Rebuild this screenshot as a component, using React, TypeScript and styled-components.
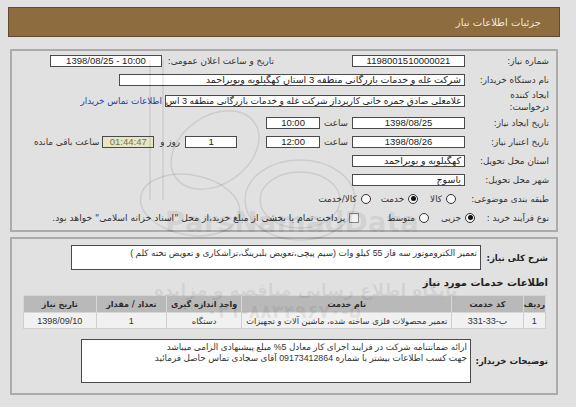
import React from "react";
import styled, { createGlobalStyle } from "styled-components";

const Global = createGlobalStyle`
  html, body { margin: 0; padding: 0; background: #e1e1e1; }
  body { font-family: "Liberation Sans", "DejaVu Sans", sans-serif; color: #333; }
  * { box-sizing: border-box; }
`;

const Page = styled.div`
  direction: rtl;
  position: relative;
  width: 576px;
  height: 407px;
  overflow: hidden;
  padding: 7px 16px 0 8px;
`;

const Header = styled.div`
  height: 30px;
  border: 1px solid #5e4b31;
  background: #8d6c3f;
  display: flex;
  align-items: center;
  padding-right: 18px;
  color: #f1e9da;
  font-size: 10px;
  font-family: "DejaVu Sans", sans-serif;
`;

const InfoPanel = styled.div`
  margin: 12px 2px 0 2px;
  border: 2px solid #ababab;
  padding: 0 7px 3px 0;
`;

const DetailPanel = styled.div`
  margin: 5px 2px 0 2px;
  border: 2px solid #ababab;
  padding: 6px 8px 10px 0;
`;

const Row = styled.div<{ $h?: number; $mt?: number }>`
  display: flex;
  align-items: center;
  min-height: ${(p) => p.$h ?? 19}px;
  margin-top: ${(p) => p.$mt ?? 0}px;
`;

const Label = styled.div<{ $w?: number; $bold?: boolean }>`
  width: ${(p) => p.$w ?? 84}px;
  flex: none;
  font-family: "DejaVu Sans", sans-serif;
  font-size: ${(p) => (p.$bold ? 8.6 : 8.8)}px;
  font-weight: ${(p) => (p.$bold ? "bold" : "normal")};
  line-height: 12px;
  white-space: nowrap;
  color: ${(p) => (p.$bold ? "#222" : "#333")};
`;

const Field = styled.div<{ $w: number; $ltr?: boolean; $tone?: "yellow"; $size?: number }>`
  width: ${(p) => p.$w}px;
  height: 12px;
  flex: none;
  border: 1px solid #4a4a4a;
  background: ${(p) => (p.$tone === "yellow" ? "#e6e6c4" : "#fff")};
  color: ${(p) => (p.$tone === "yellow" ? "#76764e" : "#222")};
  font-family: "Liberation Sans", "DejaVu Sans", sans-serif;
  font-size: ${(p) => p.$size ?? 9.5}px;
  line-height: 10px;
  padding: 0 3px;
  white-space: nowrap;
  overflow: hidden;
  direction: ${(p) => (p.$ltr ? "ltr" : "rtl")};
  text-align: ${(p) => (p.$ltr ? "center" : "right")};
`;

const TextArea = styled.div<{ $w: number; $h: number }>`
  width: ${(p) => p.$w}px;
  height: ${(p) => p.$h}px;
  flex: none;
  border: 1px solid #4a4a4a;
  background: #fff;
  font-family: "Liberation Sans", "DejaVu Sans", sans-serif;
  font-size: 8.8px;
  line-height: 10.5px;
  padding: 2px 3px;
  overflow: hidden;
`;

const Line = styled.div`
  white-space: nowrap;
`;

const Small = styled.span<{ $ml?: number; $mr?: number }>`
  font-family: "DejaVu Sans", sans-serif;
  font-size: 8.8px;
  white-space: nowrap;
  margin-left: ${(p) => p.$ml ?? 0}px;
  margin-right: ${(p) => p.$mr ?? 0}px;
`;

const Link = styled.a`
  font-family: "DejaVu Sans", sans-serif;
  font-size: 8.8px;
  color: #1f3f9e;
  text-decoration: none;
  white-space: nowrap;
  margin-right: 3px;
`;

const Options = styled.div`
  display: flex;
  align-items: center;
`;

const Option = styled.label<{ $gap?: number; $size?: number }>`
  display: flex;
  align-items: center;
  gap: 4px;
  margin-left: ${(p) => p.$gap ?? 10}px;
  font-family: "DejaVu Sans", sans-serif;
  font-size: ${(p) => p.$size ?? 8.8}px;
  white-space: nowrap;
`;

const Radio = styled.span<{ $on?: boolean }>`
  width: 10px;
  height: 10px;
  border-radius: 50%;
  border: 1px solid #333;
  background: #f7f7f7;
  position: relative;
  flex: none;
  &::after {
    content: "";
    position: absolute;
    inset: 1.5px;
    border-radius: 50%;
    background: ${(p) => (p.$on ? "#111" : "transparent")};
  }
`;

const Check = styled.span`
  width: 10px;
  height: 10px;
  border: 1px solid #888;
  background: #f2f2f2;
  flex: none;
`;

const Title = styled.div`
  font-family: "DejaVu Sans", sans-serif;
  font-weight: bold;
  font-size: 10px;
  height: 20px;
  line-height: 20px;
  margin: 3px 0 2px 0;
  color: #222;
`;

const Table = styled.table`
  width: 523px;
  margin-right: 2px;
  border-collapse: collapse;
  font-family: "Liberation Sans", "DejaVu Sans", sans-serif;
  font-size: 9px;
`;

const Th = styled.th<{ $w: number }>`
  width: ${(p) => p.$w}px;
  height: 17px;
  background: #b9b9b9;
  border: 1px solid #d6d6d6;
  font-family: "DejaVu Sans", sans-serif;
  font-size: 8px;
  font-weight: bold;
  color: #2a2a2a;
  padding: 0;
`;

const Td = styled.td`
  height: 16px;
  background: #f1f1f1;
  border: 1px solid #cfcfcf;
  text-align: center;
  padding: 0 2px;
  white-space: nowrap;
  color: #333;
`;

const CellText = styled.span`
  font-family: "DejaVu Sans", sans-serif;
  font-size: 8.3px;
`;

const Buttons = styled.div`
  display: flex;
  gap: 12px;
  margin-top: 12px;
  margin-right: 82px;
`;

const Btn = styled.div<{ $w: number; $red?: boolean }>`
  width: ${(p) => p.$w}px;
  height: 20px;
  border: 1px solid ${(p) => (p.$red ? "#b88" : "#7a9a7a")};
  background: ${(p) => (p.$red ? "#f6dada" : "#e6f5e6")};
`;

const Watermark = styled.div`
  position: absolute;
  inset: 0;
  pointer-events: none;
  direction: ltr;
`;

const WmText = styled.div<{ $x: number; $y: number; $s: number }>`
  position: absolute;
  left: ${(p) => p.$x}px;
  top: ${(p) => p.$y}px;
  font-size: ${(p) => p.$s}px;
  font-weight: bold;
  color: rgba(0, 0, 0, 0.07);
  white-space: nowrap;
  font-family: "DejaVu Sans", sans-serif;
`;

const services = [
  { w: 21, h: "ردیف", v: "1", fa: false },
  { w: 72, h: "کد خدمت", v: "ب-33-331", fa: false },
  { w: 210, h: "نام خدمت", v: "تعمیر محصولات فلزی ساخته شده، ماشین آلات و تجهیزات", fa: true },
  { w: 76, h: "واحد اندازه گیری", v: "دستگاه", fa: true },
  { w: 71, h: "تعداد / مقدار", v: "1", fa: false },
  { w: 73, h: "تاریخ نیاز", v: "1398/09/10", fa: false },
];

export default function App() {
  return (
    <Page>
      <Global />
      <Header>جزئیات اطلاعات نیاز</Header>

      <InfoPanel>
        <Row>
          <Label>شماره نیاز:</Label>
          <Field $w={113} $ltr>1198001510000021</Field>
          <Label $w={112} style={{ marginRight: 78 }}>تاریخ و ساعت اعلان عمومی:</Label>
          <Field $w={112} $ltr>1398/08/25 - 10:00</Field>
        </Row>
        <Row>
          <Label>نام دستگاه خریدار:</Label>
          <Field $w={346}>شرکت غله و خدمات بازرگانی منطقه 3 استان کهگیلویه وبویراحمد</Field>
        </Row>
        <Row $h={24}>
          <Label>
            ایجاد کننده
            <br />
            درخواست:
          </Label>
          <Field $w={300} $size={9.1}>غلامعلی صادق جمره خانی کاربرداز شرکت غله و خدمات بازرگانی منطقه 3 اس</Field>
          <Link href="#">اطلاعات تماس خریدار</Link>
        </Row>
        <Row>
          <Label>تاریخ ایجاد نیاز:</Label>
          <Field $w={113} $ltr>1398/08/25</Field>
          <Small $mr={4} $ml={4}>ساعت</Small>
          <Field $w={54} $ltr>10:00</Field>
        </Row>
        <Row>
          <Label>تاریخ اعتبار نیاز:</Label>
          <Field $w={113} $ltr>1398/08/26</Field>
          <Small $mr={4} $ml={4}>ساعت</Small>
          <Field $w={54} $ltr>12:00</Field>
          <Field $w={52} $ltr style={{ marginRight: 29 }}>1</Field>
          <Small $mr={5} $ml={6}>روز و</Small>
          <Field $w={52} $ltr $tone="yellow">01:44:47</Field>
          <Small $mr={3}>ساعت باقی مانده</Small>
        </Row>
        <Row>
          <Label>استان محل تحویل:</Label>
          <Field $w={113}>کهگیلویه و بویراحمد</Field>
        </Row>
        <Row>
          <Label>شهر محل تحویل:</Label>
          <Field $w={113}>یاسوج</Field>
        </Row>
        <Row>
          <Label $w={93}>طبقه بندی موضوعی:</Label>
          <Options>
            <Option $gap={12}><Radio />کالا</Option>
            <Option $gap={10}><Radio $on />خدمت</Option>
            <Option><Radio />کالا/خدمت</Option>
          </Options>
        </Row>
        <Row>
          <Label $w={74}>نوع فرآیند خرید :</Label>
          <Options>
            <Option $gap={12}><Radio $on />جزیی</Option>
            <Option $gap={28}><Radio />متوسط</Option>
            <Option $size={9.2}>
              <Check />
              پرداخت تمام یا بخشی از مبلغ خرید،از محل "اسناد خزانه اسلامی" خواهد بود.
            </Option>
          </Options>
        </Row>
      </InfoPanel>

      <DetailPanel>
        <Row>
          <Label $w={67} $bold>شرح کلی نیاز:</Label>
          <TextArea $w={410} $h={25}>
            <Line>تعمیر الکتروموتور سه فاز 55 کیلو وات (سیم پیچی،تعویض بلبرینگ،تراشکاری و تعویض تخته کلم )</Line>
          </TextArea>
        </Row>
        <Title>اطلاعات خدمات مورد نیاز</Title>
        <Table>
          <thead>
            <tr>
              {services.map((s) => (
                <Th key={s.h} $w={s.w}>{s.h}</Th>
              ))}
            </tr>
          </thead>
          <tbody>
            <tr>
              {services.map((s) => (
                <Td key={s.h}>{s.fa ? <CellText>{s.v}</CellText> : s.v}</Td>
              ))}
            </tr>
          </tbody>
        </Table>
        <Row $mt={10} $h={44}>
          <Label $w={77} $bold>توضیحات خریدار:</Label>
          <TextArea $w={390} $h={44}>
            <Line>ارائه ضمانتنامه شرکت در فرایند اجرای کار معادل 5% مبلغ پیشنهادی الزامی میباشد</Line>
            <Line>جهت کسب اطلاعات بیشتر با شماره 09173412864 آقای سجادی تماس حاصل فرمائید</Line>
          </TextArea>
        </Row>
      </DetailPanel>

      <Buttons>
        <Btn $w={76} />
        <Btn $w={134} />
        <Btn $w={37} />
        <Btn $w={38} $red />
        <Btn $w={38} $red />
      </Buttons>

      <Watermark>
        <svg width="576" height="407" style={{ position: "absolute", left: 0, top: 0 }}>
          <g fill="none" stroke="rgba(0,0,0,0.09)" strokeWidth="1.5">
            <line x1="150" y1="60" x2="150" y2="200" />
            <line x1="163" y1="60" x2="163" y2="200" />
            <ellipse cx="215" cy="150" rx="48" ry="34" transform="rotate(-35 215 150)" />
            <ellipse cx="190" cy="205" rx="50" ry="30" transform="rotate(10 190 205)" />
            <ellipse cx="300" cy="200" rx="55" ry="40" />
            <ellipse cx="300" cy="200" rx="40" ry="28" />
          </g>
        </svg>
        <WmText $x={165} $y={206} $s={28}>ParsNamadData</WmText>
        <WmText $x={154} $y={280} $s={17}>پایگاه اطلاع رسانی مناقصه و مزایده</WmText>
        <WmText $x={206} $y={300} $s={19}>۰۲۱-۸۸۳۴۹۶۷۰-۵</WmText>
      </Watermark>
    </Page>
  );
}
